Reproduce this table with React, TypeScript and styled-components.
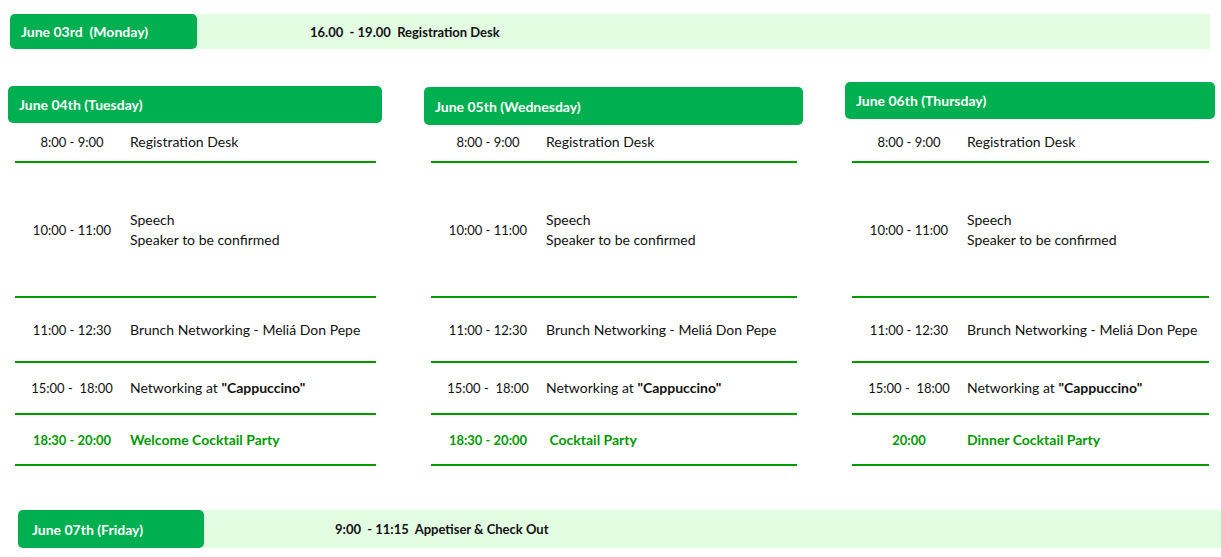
import React from 'react';
import styled, { createGlobalStyle } from 'styled-components';

const Colors = {
  brand: '#00b050',
  line: '#009a00',
  pale: '#e3fde3',
  text: '#111111',
  white: '#ffffff',
};

const GlobalStyle = createGlobalStyle`
  html, body {
    margin: 0;
    padding: 0;
    background: ${Colors.white};
  }
  body {
    font-family: Lato, "Open Sans", "Liberation Sans", sans-serif;
    font-size: 13px;
    color: ${Colors.text};
  }
`;

const Page = styled.div`
  width: 1221px;
  height: 557px;
  overflow: hidden;
  display: flex;
  flex-direction: column;
`;

const DayBar = styled.div<{ $margin: string; $height: number }>`
  display: flex;
  align-items: stretch;
  height: ${(p) => p.$height}px;
  margin: ${(p) => p.$margin};
  background: ${Colors.pale};
`;

const BarTab = styled.div<{ $width: number; $pad: number }>`
  flex: 0 0 ${(p) => p.$width}px;
  display: flex;
  align-items: center;
  padding-left: ${(p) => p.$pad}px;
  box-sizing: border-box;
  background: ${Colors.brand};
  border-radius: 5px;
  color: ${Colors.white};
  font-weight: 700;
  font-size: 14px;
  white-space: pre;
`;

const BarText = styled.div<{ $indent: number }>`
  display: flex;
  align-items: center;
  padding-left: ${(p) => p.$indent}px;
  font-weight: 700;
  font-size: 13px;
  white-space: pre;
`;

const Columns = styled.div`
  display: grid;
  grid-template-columns: 374px 379px 370px;
  column-gap: 42px;
  padding-left: 8px;
  margin-top: 33px;
`;

const Column = styled.div`
  display: flex;
  flex-direction: column;
`;

const HeaderSlot = styled.div`
  height: 41px;
`;

const DayHeader = styled.div<{ $offset: number; $height: number }>`
  margin-top: ${(p) => p.$offset}px;
  height: ${(p) => p.$height}px;
  display: flex;
  align-items: center;
  padding-left: 11px;
  background: ${Colors.brand};
  border-radius: 5px;
  color: ${Colors.white};
  font-weight: 700;
  font-size: 14px;
`;

const Rows = styled.div`
  margin: 0 6px 0 7px;
`;

const Row = styled.div<{ $height: number; $accent?: boolean }>`
  height: ${(p) => p.$height}px;
  display: flex;
  align-items: center;
  border-bottom: 2px solid ${Colors.line};
  box-sizing: border-box;
  color: ${(p) => (p.$accent ? Colors.line : Colors.text)};
  font-weight: ${(p) => (p.$accent ? 700 : 400)};
`;

const Time = styled.div`
  flex: 0 0 114px;
  text-align: center;
  font-size: 13px;
  white-space: pre;
`;

const Desc = styled.div`
  padding-left: 1px;
  font-size: 14px;
  line-height: 20px;
  white-space: pre;
`;

type Slot = { time: string; desc: React.ReactNode; height: number; accent?: boolean };

const cappuccino = (
  <>
    Networking at <b>"Cappuccino"</b>
  </>
);

const baseSlots = (last: { time: string; desc: string }): Slot[] => [
  { time: '8:00 - 9:00', desc: 'Registration Desk', height: 40 },
  {
    time: '10:00 - 11:00',
    desc: (
      <>
        Speech
        <br />
        Speaker to be confirmed
      </>
    ),
    height: 135,
  },
  { time: '11:00 - 12:30', desc: 'Brunch Networking - Meliá Don Pepe', height: 65 },
  { time: '15:00 -  18:00', desc: cappuccino, height: 52 },
  { time: last.time, desc: last.desc, height: 51, accent: true },
];

const days = [
  {
    title: 'June 04th (Tuesday)',
    offset: 4,
    height: 37,
    slots: baseSlots({ time: '18:30 - 20:00', desc: 'Welcome Cocktail Party' }),
  },
  {
    title: 'June 05th (Wednesday)',
    offset: 5,
    height: 38,
    slots: baseSlots({ time: '18:30 - 20:00', desc: ' Cocktail Party' }),
  },
  {
    title: 'June 06th (Thursday)',
    offset: 0,
    height: 37,
    slots: baseSlots({ time: '20:00', desc: 'Dinner Cocktail Party' }),
  },
];

const App = () => (
  <>
    <GlobalStyle />
    <Page>
      <DayBar $margin="14px 11px 0 10px" $height={35}>
        <BarTab $width={187} $pad={11}>June 03rd  (Monday)</BarTab>
        <BarText $indent={113}>16.00  - 19.00  Registration Desk</BarText>
      </DayBar>

      <Columns>
        {days.map((day) => (
          <Column key={day.title}>
            <HeaderSlot>
              <DayHeader $offset={day.offset} $height={day.height}>
                {day.title}
              </DayHeader>
            </HeaderSlot>
            <Rows>
              {day.slots.map((slot, i) => (
                <Row key={i} $height={slot.height} $accent={slot.accent}>
                  <Time>{slot.time}</Time>
                  <Desc>{slot.desc}</Desc>
                </Row>
              ))}
            </Rows>
          </Column>
        ))}
      </Columns>

      <DayBar $margin="44px 0 0 18px" $height={38}>
        <BarTab $width={186} $pad={14}>June 07th (Friday)</BarTab>
        <BarText $indent={131}>9:00  - 11:15  Appetiser &amp; Check Out</BarText>
      </DayBar>
    </Page>
  </>
);

export default App;
